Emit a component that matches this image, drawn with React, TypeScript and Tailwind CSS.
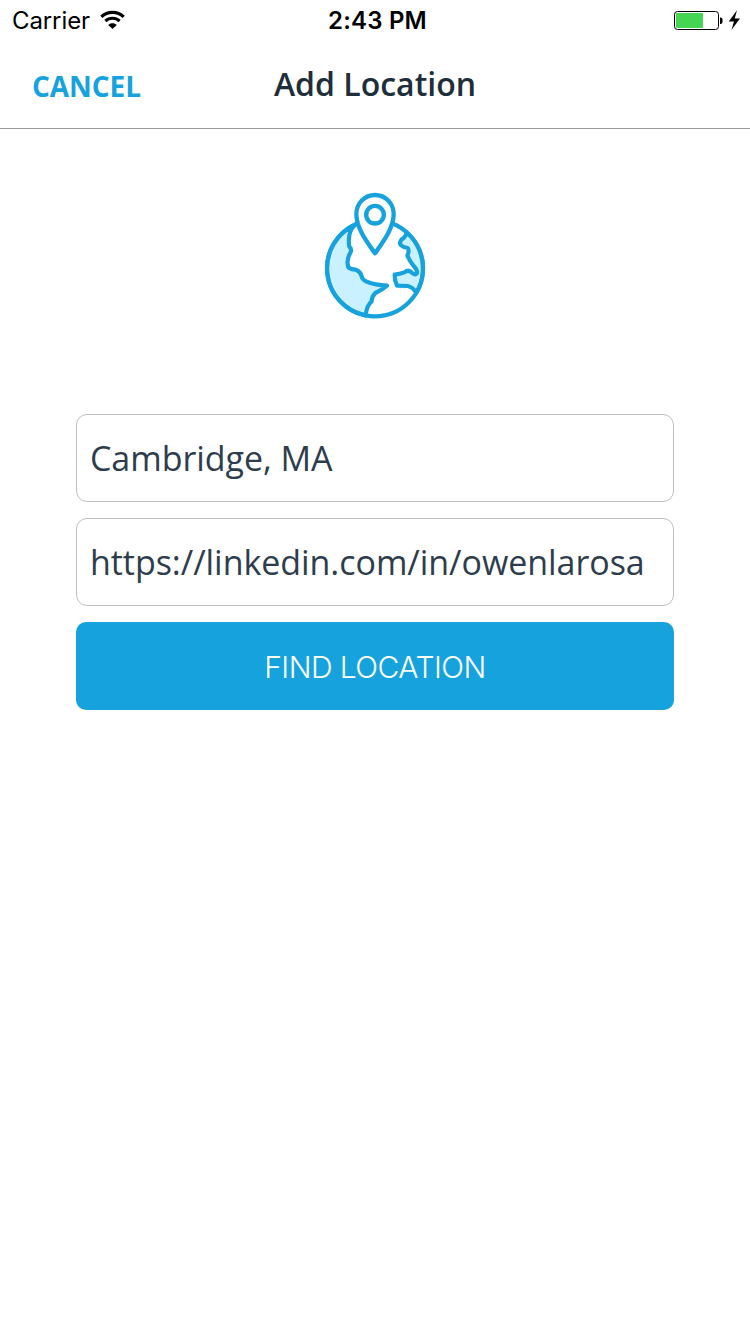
import React from 'react';

const fieldClass =
  "block h-[88px] w-full rounded-[11px] border border-[#bfbfbf] bg-white pl-[13px] pr-3 font-['Open_Sans',sans-serif] text-[34px] tracking-[-0.05px] text-[#2e3d4d] outline-none";

function WifiIcon() {
  return (
    <svg className="ml-[10px] mt-[10px]" width="26" height="20" viewBox="0 0 26 20" fill="none" stroke="#000">
      <path d="M1.300 6.900C7.500.9 17.500.9 23.700 6.900" strokeWidth="3.200" />
      <path d="M5.400 11.100C9.300 7.300 15.700 7.300 19.600 11.100" strokeWidth="3" />
      <path d="M12.500 19L8.200 14.900C10.600 12.700 14.400 12.700 16.800 14.900Z" fill="#000" stroke="none" />
    </svg>
  );
}

function BatteryIcon() {
  return (
    <svg width="68" height="22" viewBox="0 0 68 22">
      <rect x="0.5" y="1.5" width="44" height="18" rx="3" fill="#fff" stroke="#000" />
      <rect x="2" y="3" width="27" height="15" rx="1" fill="#44d653" />
      <path d="M46 7.500h.5a2 2 0 0 1 2 2v2.500a2 2 0 0 1-2 2H46z" fill="#000" />
      <path d="M63 .2L54.700 11.600H60L57.400 20L66 8.400H60.700Z" fill="#000" />
    </svg>
  );
}

function GlobeIcon() {
  return (
    <svg width="130" height="140" viewBox="0 0 390 420" fill="none" stroke="#16a3dd" strokeWidth="12.5" strokeLinecap="round" strokeLinejoin="round">
      <path
        d="M138 117.800Q122 129 118 151Q115 170 118 185Q127 193 121 203Q108 226 115 247Q122 253 137 254Q151 260 154 271Q155 282 168 289Q183 296 198 298Q214 301 231 302Q216 315 196 324Q185 335 185 349Q170 361 167 391.200A144 144 0 0 1 138 117.800Z"
        fill="#caf1ff"
      />
      <path
        d="M290 141.800Q286 158 275 163Q267 172 272 180Q281 188 293 189Q299 197 292 212Q299 228 311 243Q323 255 321 265Q317 272 305 263Q296 252 283 262Q270 267 254 269Q253 284 261 302L293 303Q308 306 319 323.200A144 144 0 0 0 290 141.800Z"
        fill="#caf1ff"
      />
      <circle cx="195" cy="250" r="144" />
      <path d="M195 205C177 179 139 132 139 88C139 54 164 30 195 30C226 30 251 54 251 88C251 132 213 179 195 205Z" fill="#fff" strokeWidth="13" />
      <circle cx="195" cy="89" r="26.5" fill="#fff" strokeWidth="13" />
    </svg>
  );
}

export default function App() {
  return (
    <div className="flex h-[1334px] w-[750px] flex-col overflow-hidden bg-white">
      <header className="h-[129px] border-b border-[#9b9b9b]">
        <div className="grid h-10 grid-cols-[250px_1fr_250px] font-['Inter',sans-serif] text-[24px] leading-[42px] text-black">
          <div className="flex items-start pl-3">
            <span className="tracking-[-0.1px]">Carrier</span>
            <WifiIcon />
          </div>
          <div className="pl-[5px] text-center font-semibold tracking-[0.2px]">2:43 PM</div>
          <div className="flex justify-end pr-2 pt-[10px]">
            <BatteryIcon />
          </div>
        </div>
        <nav className="grid h-[88px] grid-cols-[250px_1fr_250px] items-center font-['Open_Sans',sans-serif]">
          <button type="button" className="pl-8 pt-1 text-left text-[28px] font-bold tracking-[-0.05px] text-[#16a3dd]">
            CANCEL
          </button>
          <h1 className="pb-px text-center text-[32px] font-semibold whitespace-nowrap text-[#202d3a]">Add Location</h1>
        </nav>
      </header>
      <main className="flex flex-col items-center pt-14">
        <GlobeIcon />
        <form className="mt-[89px] flex w-[598px] flex-col gap-4" onSubmit={(e) => e.preventDefault()}>
          <input aria-label="Location" className={fieldClass} defaultValue="Cambridge, MA" />
          <input aria-label="Website" className={fieldClass} defaultValue="https://linkedin.com/in/owenlarosa" />
          <button
            type="submit"
            className="h-[88px] rounded-[10px] bg-[#16a3dd] pt-[2px] font-['Inter',sans-serif] text-[30px] font-light tracking-[-0.55px] text-white"
          >
            FIND LOCATION
          </button>
        </form>
      </main>
    </div>
  );
}
